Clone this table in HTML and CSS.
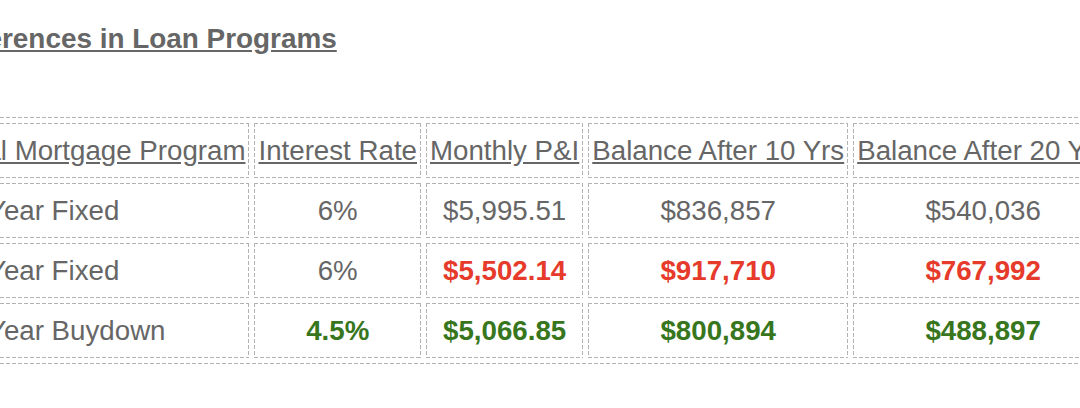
FILE: index.html
```html
<!DOCTYPE html>
<html lang="en">
<head>
<meta charset="utf-8">
<title>Differences in Loan Programs</title>
<link rel="stylesheet" href="styles.css">
</head>
<body>
<div class="page">
  <h2 class="title">Differences in Loan Programs</h2>
  <table class="loans">
    <thead>
      <tr>
        <th class="col-name">Real Mortgage Program</th>
        <th>Interest Rate</th>
        <th>Monthly P&amp;I</th>
        <th>Balance After 10 Yrs</th>
        <th>Balance After 20 Yrs</th>
      </tr>
    </thead>
    <tbody>
      <tr>
        <td class="col-name">30 Year Fixed</td>
        <td>6%</td>
        <td>$5,995.51</td>
        <td>$836,857</td>
        <td>$540,036</td>
      </tr>
      <tr>
        <td class="col-name">40 Year Fixed</td>
        <td>6%</td>
        <td class="bad">$5,502.14</td>
        <td class="bad">$917,710</td>
        <td class="bad">$767,992</td>
      </tr>
      <tr>
        <td class="col-name">30 Year Buydown</td>
        <td class="good">4.5%</td>
        <td class="good">$5,066.85</td>
        <td class="good">$800,894</td>
        <td class="good">$488,897</td>
      </tr>
    </tbody>
  </table>
</div>
</body>
</html>
```
FILE: styles.css
```css
html, body {
  margin: 0;
  padding: 0;
  overflow: hidden;
  background: #ffffff;
}

body {
  font-family: "Liberation Sans", Arial, Helvetica, sans-serif;
  color: #666666;
  width: 1080px;
  height: 408px;
}

.page {
  margin-left: -60px;
  padding-top: 23px;
  width: 1300px;
}

.title {
  margin: 0;
  font-size: 27.9px;
  font-weight: bold;
  line-height: 32px;
  text-decoration: underline;
  color: #666666;
}

.loans,
.loans th,
.loans td {
  border: 1px solid transparent;
  background-origin: border-box;
  background-clip: border-box;
  background-image:
    repeating-linear-gradient(90deg, #b3b3b3 0 4px, transparent 4px 6px),
    repeating-linear-gradient(90deg, #b3b3b3 0 4px, transparent 4px 6px),
    repeating-linear-gradient(180deg, #b3b3b3 0 4px, transparent 4px 6px),
    repeating-linear-gradient(180deg, #b3b3b3 0 4px, transparent 4px 6px);
  background-size: 100% 1px, 100% 1px, 1px 100%, 1px 100%;
  background-position: left top, left bottom, left top, right top;
  background-repeat: no-repeat;
}

.loans {
  margin-top: 62px;
  border-spacing: 5px;
  font-size: 27.7px;
  line-height: 32px;
  color: #666666;
}

.loans th,
.loans td {
  padding: 11px 3px 10px;
  text-align: center;
  white-space: nowrap;
}

.loans th {
  font-weight: normal;
  text-decoration: underline;
}

.loans td.col-name {
  text-align: left;
}

.loans td.bad {
  color: #e63a2b;
  font-weight: bold;
}

.loans td.good {
  color: #38761d;
  font-weight: bold;
}
```
